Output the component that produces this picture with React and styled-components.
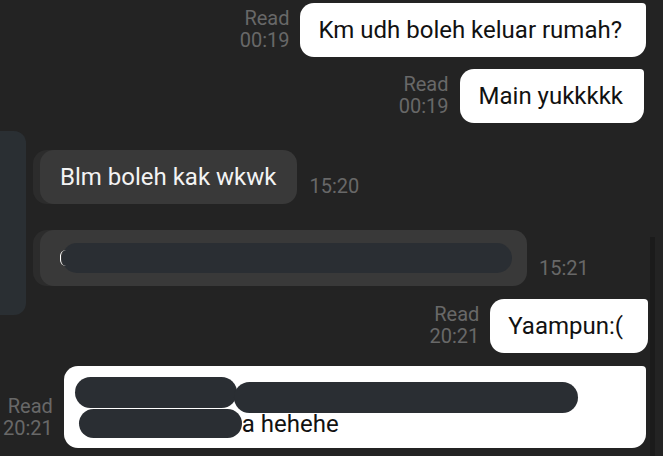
import React from "react";
import styled, { createGlobalStyle } from "styled-components";

const Global = createGlobalStyle`
  html, body { margin: 0; padding: 0; background: #232323; }
  body { font-family: Roboto, "Noto Sans", "Liberation Sans", sans-serif; }
`;

const Screen = styled.div`
  position: relative;
  width: 663px;
  height: 456px;
  overflow: hidden;
  background: #232323;
`;

const Chat = styled.div`
  display: flex;
  flex-direction: column;
  padding-top: 3px;
`;

const Row = styled.div`
  display: flex;
  align-items: flex-end;
  justify-content: ${(p) => (p.$side === "right" ? "flex-end" : "flex-start")};
  margin-top: ${(p) => p.$mt || 0}px;
  padding-right: ${(p) => p.$pr || 0}px;
  padding-left: ${(p) => p.$pl || 0}px;
`;

const Meta = styled.div`
  display: flex;
  flex-direction: column;
  align-items: ${(p) => (p.$align === "left" ? "flex-start" : "flex-end")};
  font-size: 20px;
  line-height: 22px;
  color: #686868;
  flex-shrink: 0;
  margin-right: ${(p) => (p.$align === "left" ? 0 : 11)}px;
  margin-left: ${(p) => (p.$align === "left" ? 12 : 0)}px;
  padding-bottom: ${(p) => p.$pb ?? 6}px;
`;

const Bubble = styled.div`
  font-size: 24px;
  line-height: 28px;
  padding: 13px ${(p) => p.$padR || 20}px 13px ${(p) => p.$padL || 19}px;
  white-space: nowrap;
  ${(p) =>
    p.$variant === "sent"
      ? `
    background: #ffffff;
    color: #111111;
    border-radius: 14px 4px 14px 14px;
  `
      : `
    background: #393939;
    color: #f3f3f3;
    border-radius: 14px;
    box-shadow: -7px 0 0 #2c2c2c;
  `}
`;

const WideBubble = styled(Bubble)`
  flex: 1;
  padding: 11px 0 10px 11px;
  display: flex;
  flex-direction: column;
`;

const Redact = styled.span`
  position: relative;
  display: block;
  flex-shrink: 0;
  background: #2a2e33;
  width: ${(p) => p.$w}px;
  height: ${(p) => p.$h}px;
  border-radius: ${(p) => p.$h / 2}px;
  margin-top: ${(p) => p.$mt || 0}px;
  margin-left: ${(p) => p.$ml || 0}px;
  ${(p) =>
    p.$mark &&
    `
    &::before {
      content: "";
      position: absolute;
      left: -2px;
      top: 7px;
      width: 5px;
      height: 16px;
      border-left: 1.5px solid #ffffff;
      border-radius: 6px 0 0 6px;
    }
  `}
`;

const Line = styled.div`
  display: flex;
  align-items: ${(p) => p.$align || "flex-start"};
  margin-top: ${(p) => p.$mt || 0}px;
`;

const LineText = styled.span`
  font-size: 24px;
  line-height: 28px;
  color: #111111;
`;

const AvatarMask = styled.div`
  position: absolute;
  left: 0;
  top: 131px;
  width: 26px;
  height: 184px;
  background: #2a2f33;
  border-radius: 0 12px 12px 0;
`;

const ScrollTrack = styled.div`
  position: absolute;
  left: 650px;
  top: 237px;
  width: 5px;
  bottom: 0;
  background: #1b1b1b;
`;

function ReadMeta({ time, pb }) {
  return (
    <Meta $pb={pb}>
      <span>Read</span>
      <span>{time}</span>
    </Meta>
  );
}

export default function App() {
  return (
    <>
      <Global />
      <Screen>
        <ScrollTrack />
        <Chat>
          <Row $side="right" $pr={17}>
            <ReadMeta time="00:19" />
            <Bubble $variant="sent" $padL={18} $padR={24}>
              Km udh boleh keluar rumah?
            </Bubble>
          </Row>
          <Row $side="right" $pr={19} $mt={12}>
            <ReadMeta time="00:19" />
            <Bubble $variant="sent" $padL={19} $padR={21}>
              Main yukkkkk
            </Bubble>
          </Row>
          <Row $side="left" $pl={40} $mt={27}>
            <Bubble $variant="received" $padL={20} $padR={21}>
              Blm boleh kak wkwk
            </Bubble>
            <Meta $align="left" $pb={7}>
              <span>15:20</span>
            </Meta>
          </Row>
          <Row $side="left" $pl={40} $mt={26}>
            <Bubble $variant="received" $padL={22} $padR={15}>
              <Redact $w={450} $h={30} $mark />
            </Bubble>
            <Meta $align="left" $pb={7}>
              <span>15:21</span>
            </Meta>
          </Row>
          <Row $side="right" $pr={15} $mt={13}>
            <ReadMeta time="20:21" />
            <Bubble $variant="sent" $padL={18} $padR={25}>
              Yaampun:(
            </Bubble>
          </Row>
          <Row $side="left" $pl={3} $pr={17} $mt={13}>
            <ReadMeta time="20:21" pb={9} />
            <WideBubble $variant="sent">
              <Line>
                <Redact $w={162} $h={31} />
                <Redact $w={344} $h={31} $mt={5} $ml={-3} />
              </Line>
              <Line $mt={-4} $align="center">
                <Redact $w={163} $h={29} $ml={4} />
                <LineText>a hehehe</LineText>
              </Line>
            </WideBubble>
          </Row>
        </Chat>
        <AvatarMask />
      </Screen>
    </>
  );
}
